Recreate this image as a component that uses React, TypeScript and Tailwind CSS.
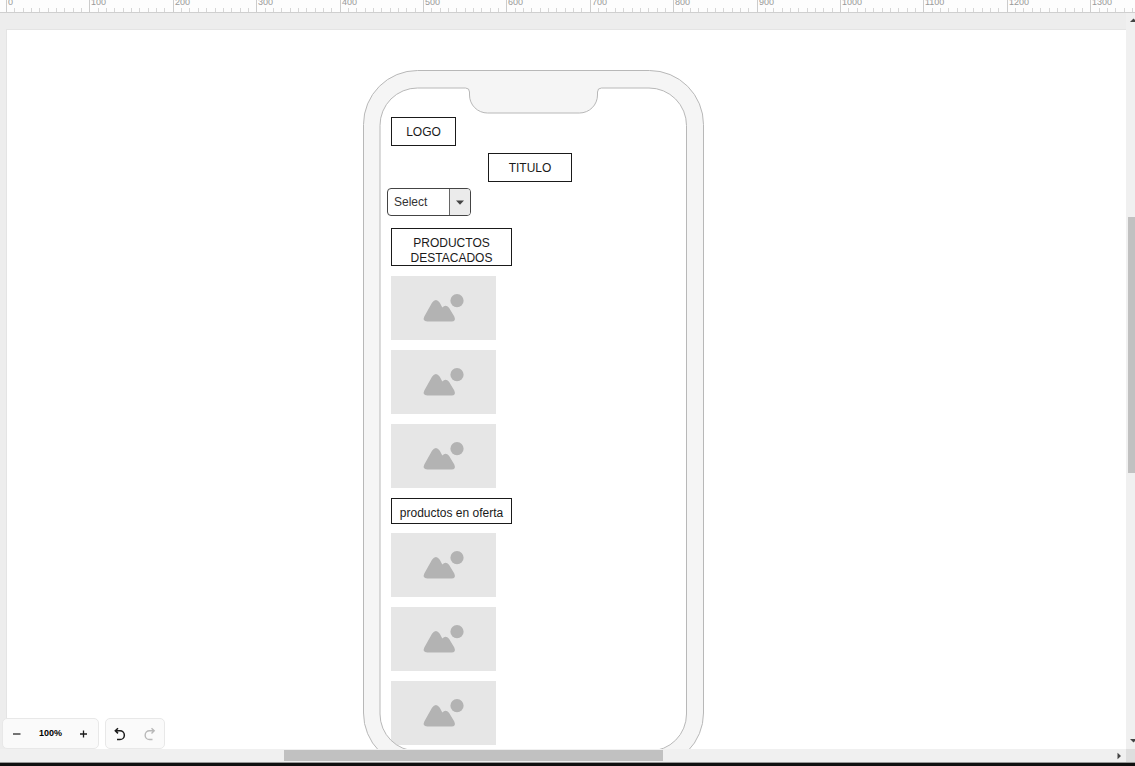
import React from "react";

const RULER_STEP = 83.4;
const MAJOR_MARKS = Array.from({ length: 24 }, (_, i) => i);
const MINOR_MARKS = Array.from({ length: 240 }, (_, i) => i);

function Ruler() {
  return (
    <header className="h-[13px] shrink-0 overflow-hidden border-b border-[#cfcfcf] bg-[#fdfdfd]">
      <svg className="block h-3 w-full" aria-label="Horizontal ruler">
        {MINOR_MARKS.map((i) => (
          <rect
            key={i}
            x={Math.round(6 + (i * RULER_STEP) / 10)}
            y={i % 10 === 0 ? 0 : 8}
            width="1"
            height={i % 10 === 0 ? 12 : 4}
            fill={i % 10 === 0 ? "#cccccc" : "#d6d6d6"}
          />
        ))}
        {MAJOR_MARKS.map((i) => (
          <text
            key={i}
            x={Math.round(8 + i * RULER_STEP)}
            y="5"
            className="fill-[#999999] font-['Liberation_Sans',sans-serif] text-[9px]"
          >
            {i * 100}
          </text>
        ))}
      </svg>
    </header>
  );
}

function PhoneFrame() {
  return (
    <svg
      className="pointer-events-none absolute left-0 top-0 h-[698px] w-[341px]"
      viewBox="0 0 341 698"
      fill="none"
      stroke="#b8b8b8"
      aria-hidden="true"
    >
      <path
        fill="#f5f5f5"
        fillRule="evenodd"
        d="M54.5 .5H286.5A54 54 0 0 1 340.5 54.5V643A54 54 0 0 1 286.5 697H54.5A54 54 0 0 1 .5 643V54.5A54 54 0 0 1 54.5 .5Z
           M54.5 18A37.5 37.5 0 0 0 17 55.5V644A37 37 0 0 0 54 681H286.5A37 37 0 0 0 323.5 644V55.5A37.5 37.5 0 0 0 286 18H238.5Q234.5 18 234.5 22V25A18 18 0 0 1 216.500 43H124.500A18 18 0 0 1 106.500 25V22Q106.500 18 102.500 18Z"
      />
    </svg>
  );
}

function Box({ className, children }: { className: string; children: React.ReactNode }) {
  return (
    <div className={`flex items-center justify-center border border-[#1a1a1a] bg-white text-center text-xs leading-[15px] text-[#1a1a1a] ${className}`}>
      {children}
    </div>
  );
}

function ImagePlaceholder() {
  return (
    <div className="h-16 w-[105px] bg-[#e6e6e6]" role="img" aria-label="Image">
      <svg className="block h-full w-full" viewBox="0 0 105 64" fill="#b3b3b3" aria-hidden="true">
        <circle cx="66" cy="24.700" r="6.600" />
        <path d="M33.300 40.600L41 26.800Q44.900 21.400 48.800 26.800L51.300 31.500Q54.800 28.100 58 31.800L63.300 40.600Q65.300 45.500 60.500 45.600H36.200Q31.200 45.300 33.300 40.600Z" />
      </svg>
    </div>
  );
}

function Phone() {
  return (
    <section className="relative ml-[356px] mt-10 h-[698px] w-[341px] shrink-0" aria-label="Phone wireframe">
      <div className="flex flex-col items-start pl-7 pt-[47px]">
        <Box className="h-[29px] w-[65px] pt-0.5">LOGO</Box>
        <Box className="ml-[97px] mt-[7px] h-[29px] w-[84px] pt-0.5">TITULO</Box>
        <div className="-ml-1 mt-1.5 grid h-7 w-[84px] grid-cols-[1fr_21px] overflow-hidden rounded-[4px] border border-[#444444] bg-white">
          <select
            aria-label="Select"
            className="col-span-2 col-start-1 row-start-1 h-full w-full appearance-none bg-transparent px-1.5 text-xs text-[#333333] outline-none"
          >
            <option>Select</option>
          </select>
          <span className="pointer-events-none col-start-2 row-start-1 flex items-center justify-center border-l border-[#666666] bg-[#ebebeb]">
            <svg className="h-[5px] w-2" viewBox="0 0 8 5" fill="#444444" aria-hidden="true">
              <path d="M0 .5H8L4 4.800Z" />
            </svg>
          </span>
        </div>
        <Box className="mt-3 h-[38px] w-[121px] pt-2">
          PRODUCTOS
          <br />
          DESTACADOS
        </Box>
        <div className="mt-2.5 flex flex-col gap-2.5">
          <ImagePlaceholder />
          <ImagePlaceholder />
          <ImagePlaceholder />
        </div>
        <Box className="mt-2.5 h-[26px] w-[121px] pt-1">productos en oferta</Box>
        <div className="mt-[9px] flex flex-col gap-2.5">
          <ImagePlaceholder />
          <ImagePlaceholder />
          <ImagePlaceholder />
        </div>
      </div>
      <PhoneFrame />
    </section>
  );
}

function ZoomControls() {
  return (
    <div className="absolute bottom-0 left-0.5 flex gap-1.5 text-[#1a1a1a]">
      <div className="flex h-[31px] w-[97px] items-center justify-between rounded-[5px] border border-[#e8e8e8] bg-[#fafafa] px-2">
        <button type="button" aria-label="Zoom out" className="flex size-3 items-center justify-center">
          <svg className="size-3" viewBox="0 0 12 12" aria-hidden="true">
            <path d="M2 6H9.500" stroke="currentColor" strokeWidth="1.200" />
          </svg>
        </button>
        <button type="button" className="font-['Liberation_Sans',sans-serif] text-[9px] font-bold text-black">100%</button>
        <button type="button" aria-label="Zoom in" className="flex size-3 items-center justify-center">
          <svg className="size-3" viewBox="0 0 12 12" aria-hidden="true">
            <path d="M2 6H9M5.500 2.500V9.500" stroke="currentColor" strokeWidth="1.300" />
          </svg>
        </button>
      </div>
      <div className="flex h-[31px] w-[60px] items-center justify-between rounded-[5px] border border-[#e8e8e8] bg-[#fafafa] px-2">
        <button type="button" aria-label="Undo">
          <svg className="h-[14px] w-3" viewBox="0 0 12 14" fill="none" stroke="currentColor" strokeWidth="1.500" aria-hidden="true">
            <path d="M4 1.200L1.300 3.800L4 6.400M1.500 3.800H6A4.350 4.350 0 0 1 6 12.500H3" />
          </svg>
        </button>
        <button type="button" aria-label="Redo" disabled className="text-[#b8b8b8]">
          <svg className="h-[14px] w-3" viewBox="0 0 12 14" fill="none" stroke="currentColor" strokeWidth="1.400" aria-hidden="true">
            <path d="M7.500 1.200L10.200 3.800L7.500 6.400M10 3.800H5.500A4.350 4.350 0 0 0 5.500 12.500H8.500" />
          </svg>
        </button>
      </div>
    </div>
  );
}

function VerticalScrollbar() {
  return (
    <div className="flex w-[9px] shrink-0 flex-col items-end overflow-hidden bg-[#f0f0f0]" aria-hidden="true">
      <svg className="mt-1 h-2 w-[5px] shrink-0" viewBox="0 0 5 8" fill="#444444">
        <path d="M0 5L3.500 1.500L7 5Z" />
      </svg>
      <div className="grow-[192]" />
      <div className="w-[7px] grow-[256] bg-[#c1c1c1]" />
      <div className="grow-[264]" />
      <svg className="mb-1 h-2 w-[5px] shrink-0" viewBox="0 0 5 8" fill="#444444">
        <path d="M0 2L3.500 5.500L7 2Z" />
      </svg>
    </div>
  );
}

function HorizontalScrollbar() {
  return (
    <div className="flex h-[13px] shrink-0 items-center bg-[#f0f0f0]" aria-hidden="true">
      <div className="grow-[284]" />
      <div className="h-[11px] grow-[379] bg-[#c1c1c1]" />
      <div className="grow-[453]" />
      <svg className="mr-1 h-2 w-[6px]" viewBox="0 0 6 8" fill="#444444">
        <path d="M1.500 .8L5 4L1.500 7.200Z" />
      </svg>
      <div className="h-full w-[9px] bg-[#dedede]" />
    </div>
  );
}

export default function App() {
  return (
    <div className="flex h-screen flex-col overflow-hidden bg-[#ededed] font-['Liberation_Sans',Arial,sans-serif]">
      <Ruler />
      <div className="flex min-h-0 flex-1">
        <main className="relative min-w-0 flex-1 overflow-hidden pl-1.5 pt-4">
          <div className="flow-root border-l border-t border-[#e4e4e4] bg-white">
            <Phone />
          </div>
          <ZoomControls />
        </main>
        <VerticalScrollbar />
      </div>
      <HorizontalScrollbar />
      <footer className="h-1 shrink-0 border-t border-[#999999] bg-[#101010]" />
    </div>
  );
}
